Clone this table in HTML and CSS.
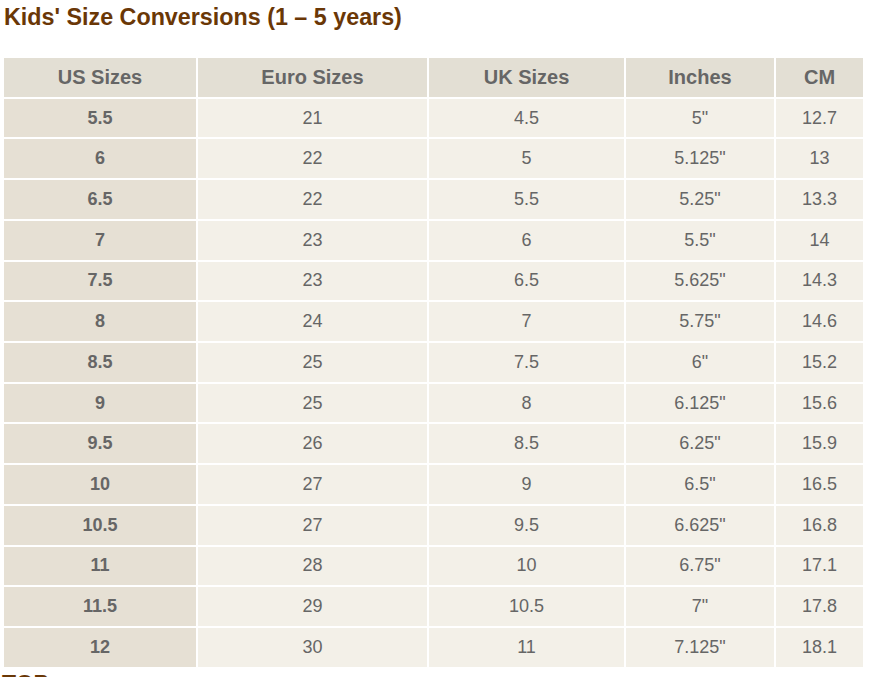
FILE: index.html
```html
<!DOCTYPE html>
<html>
<head>
<meta charset="utf-8">
<link rel="stylesheet" href="styles.css">
</head>
<body>
<div class="page">
  <h1 class="title">Kids' Size Conversions (1 – 5 years)</h1>
  <table class="sizes">
    <colgroup>
      <col class="c1"><col class="c2"><col class="c3"><col class="c4"><col class="c5">
    </colgroup>
    <thead>
      <tr><th>US Sizes</th><th>Euro Sizes</th><th>UK Sizes</th><th>Inches</th><th>CM</th></tr>
    </thead>
    <tbody>
      <tr><td class="us">5.5</td><td>21</td><td>4.5</td><td>5"</td><td>12.7</td></tr>
      <tr><td class="us">6</td><td>22</td><td>5</td><td>5.125"</td><td>13</td></tr>
      <tr><td class="us">6.5</td><td>22</td><td>5.5</td><td>5.25"</td><td>13.3</td></tr>
      <tr><td class="us">7</td><td>23</td><td>6</td><td>5.5"</td><td>14</td></tr>
      <tr><td class="us">7.5</td><td>23</td><td>6.5</td><td>5.625"</td><td>14.3</td></tr>
      <tr><td class="us">8</td><td>24</td><td>7</td><td>5.75"</td><td>14.6</td></tr>
      <tr><td class="us">8.5</td><td>25</td><td>7.5</td><td>6"</td><td>15.2</td></tr>
      <tr><td class="us">9</td><td>25</td><td>8</td><td>6.125"</td><td>15.6</td></tr>
      <tr><td class="us">9.5</td><td>26</td><td>8.5</td><td>6.25"</td><td>15.9</td></tr>
      <tr><td class="us">10</td><td>27</td><td>9</td><td>6.5"</td><td>16.5</td></tr>
      <tr><td class="us">10.5</td><td>27</td><td>9.5</td><td>6.625"</td><td>16.8</td></tr>
      <tr><td class="us">11</td><td>28</td><td>10</td><td>6.75"</td><td>17.1</td></tr>
      <tr><td class="us">11.5</td><td>29</td><td>10.5</td><td>7"</td><td>17.8</td></tr>
      <tr><td class="us">12</td><td>30</td><td>11</td><td>7.125"</td><td>18.1</td></tr>
    </tbody>
  </table>
  <h2 class="next">TOP</h2>
</div>
</body>
</html>
```

FILE: styles.css
```css
html, body {
  margin: 0;
  padding: 0;
  background: #ffffff;
}

.page {
  padding: 4px 0 0 2px;
  font-family: "Liberation Sans", Arial, sans-serif;
}

.title {
  margin: 0 0 26px 2px;
  font-size: 23.3px;
  line-height: 26px;
  font-weight: bold;
  color: #6a3706;
}

.sizes {
  border-collapse: separate;
  border-spacing: 2px;
  table-layout: fixed;
  width: 863px;
}

.c1 { width: 192px; }
.c2 { width: 229px; }
.c3 { width: 195px; }
.c4 { width: 148px; }
.c5 { width: 87px; }

.sizes th,
.sizes td {
  box-sizing: border-box;
  height: 38.73px;
  padding: 0 0 1px 0;
  text-align: center;
  vertical-align: middle;
  color: #666666;
}

.sizes th {
  background: #e3dfd4;
  font-size: 20px;
  font-weight: bold;
  line-height: 22px;
}

.sizes td {
  background: #f3f0e8;
  font-size: 18px;
  line-height: 20px;
}

.sizes td.us {
  background: #e6e0d4;
  font-weight: bold;
}

.next {
  margin: 2px 0 0 0;
  font-size: 23px;
  line-height: 26px;
  font-weight: bold;
  color: #6a3706;
}
```
